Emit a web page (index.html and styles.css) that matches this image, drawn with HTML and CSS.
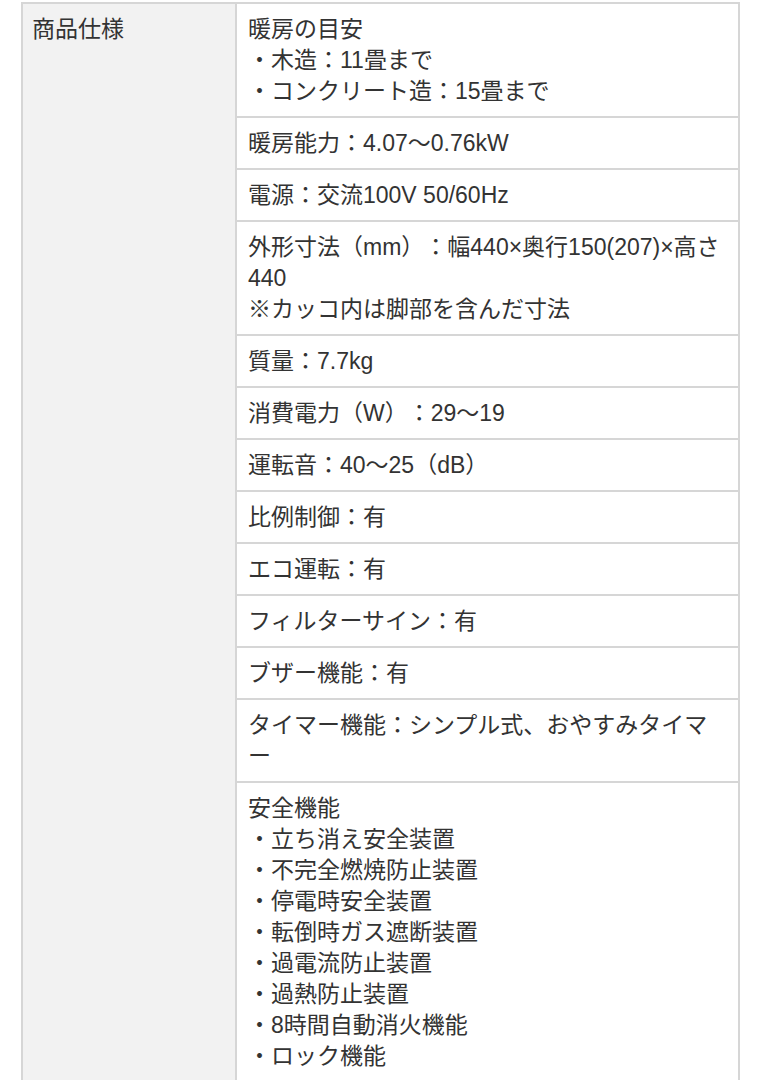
FILE: index.html
```html
<!DOCTYPE html>
<html lang="ja">
<head>
<meta charset="utf-8">
<title>商品仕様</title>
<link rel="stylesheet" href="styles.css">
</head>
<body>
<div class="spec">
  <div class="spec-head">商品仕様</div>
  <div class="spec-body">
    <div class="spec-row">暖房の目安<br>・木造：11畳まで<br>・コンクリート造：15畳まで</div>
    <div class="spec-row">暖房能力：4.07〜0.76kW</div>
    <div class="spec-row">電源：交流100V 50/60Hz</div>
    <div class="spec-row">外形寸法（mm）：幅440×奥行150(207)×高さ<br>440<br>※カッコ内は脚部を含んだ寸法</div>
    <div class="spec-row">質量：7.7kg</div>
    <div class="spec-row">消費電力（W）：29〜19</div>
    <div class="spec-row">運転音：40〜25（dB）</div>
    <div class="spec-row">比例制御：有</div>
    <div class="spec-row">エコ運転：有</div>
    <div class="spec-row">フィルターサイン：有</div>
    <div class="spec-row">ブザー機能：有</div>
    <div class="spec-row">タイマー機能：シンプル式、おやすみタイマ<br>ー</div>
    <div class="spec-row">安全機能<br>・立ち消え安全装置<br>・不完全燃焼防止装置<br>・停電時安全装置<br>・転倒時ガス遮断装置<br>・過電流防止装置<br>・過熱防止装置<br>・8時間自動消火機能<br>・ロック機能</div>
  </div>
</div>
</body>
</html>
```

FILE: styles.css
```css
html, body {
  margin: 0;
  padding: 0;
  background: #ffffff;
}

body {
  font-family: "Liberation Sans", "Noto Sans CJK JP", sans-serif;
  font-size: 23px;
  line-height: 31px;
  color: #333333;
  text-spacing-trim: space-all;
}

.spec {
  box-sizing: border-box;
  width: 719px;
  margin: 2px 0 0 21px;
  border: 2px solid #d6d6d6;
  border-bottom: none;
  display: grid;
  grid-template-columns: 214px 1fr;
}

.spec-head {
  box-sizing: border-box;
  background: #f2f2f2;
  border-right: 2px solid #d6d6d6;
  padding: 9.5px 9px;
  white-space: nowrap;
}

.spec-body {
  display: flex;
  flex-direction: column;
  min-width: 0;
}

.spec-row {
  padding: 9.5px 10px 9.5px 11px;
  border-bottom: 2px solid #d6d6d6;
  background: #ffffff;
}
```
